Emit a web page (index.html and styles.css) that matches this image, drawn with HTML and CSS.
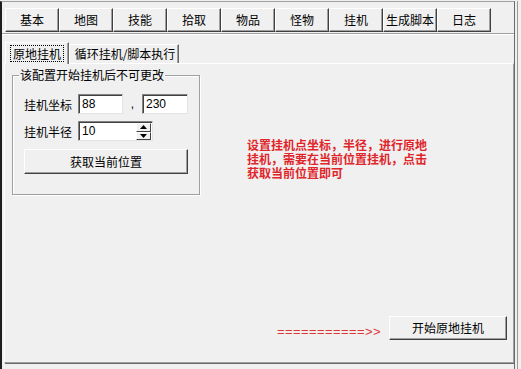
FILE: index.html
```html
<!DOCTYPE html>
<html>
<head>
<meta charset="utf-8">
<link rel="stylesheet" href="styles.css">
</head>
<body>
<div class="window">
  <div class="toolbar">
    <button class="tbtn">基本</button>
    <button class="tbtn">地图</button>
    <button class="tbtn">技能</button>
    <button class="tbtn">拾取</button>
    <button class="tbtn">物品</button>
    <button class="tbtn">怪物</button>
    <button class="tbtn">挂机</button>
    <button class="tbtn">生成脚本</button>
    <button class="tbtn">日志</button>
  </div>
  <div class="sep"></div>
  <div class="tabs">
    <div class="tab active"><span class="focus">原地挂机</span></div>
    <div class="tab second">循环挂机/脚本执行</div>
  </div>
  <div class="panel">
    <div class="top-area">
      <div class="group">
        <span class="group-title">该配置开始挂机后不可更改</span>
        <div class="row">
          <span class="label">挂机坐标</span>
          <span class="edit w45">88</span>
          <span class="comma">,</span>
          <span class="edit w46">230</span>
        </div>
        <div class="row row2">
          <span class="label">挂机半径</span>
          <span class="edit spinedit">10
            <span class="spin">
              <span class="spin-half"><svg width="7" height="4" viewBox="0 0 7 4"><path d="M0 4 L3.5 0 L7 4 Z" fill="#000"/></svg></span>
              <span class="spin-half"><svg width="7" height="4" viewBox="0 0 7 4"><path d="M0 0 L3.5 4 L7 0 Z" fill="#000"/></svg></span>
            </span>
          </span>
        </div>
        <button class="btn wide">获取当前位置</button>
      </div>
      <p class="note">设置挂机点坐标，半径，进行原地挂机，需要在当前位置挂机，点击获取当前位置即可</p>
    </div>
    <div class="bottom">
      <span class="arrow">===========&gt;&gt;</span>
      <button class="btn start">开始原地挂机</button>
    </div>
  </div>
</div>
</body>
</html>
```
FILE: styles.css
```css
* { box-sizing: border-box; }
html, body {
  margin: 0;
  padding: 0;
  background: #f0f0f0;
}
body {
  padding-top: 1px;
  font-family: "Noto Sans CJK SC", "Liberation Sans", sans-serif;
  font-size: 12px;
  color: #000;
}
.window {
  width: 515px;
  height: 368px;
  border-top: 1px solid #a0a0a0;
  border-left: 2px solid #1e1e1e;
  border-right: 1px solid #696969;
  box-shadow: 2px 0 0 #f0f0f0, 3px 0 0 #9a9a9a;
  background: #f0f0f0;
  display: flex;
  flex-direction: column;
}
.toolbar {
  display: flex;
  margin: 6px 0 0 3px;
}
.tbtn, .btn {
  font-family: "Noto Sans CJK SC", "Liberation Sans", sans-serif;
  font-size: 12px;
  color: #000;
  background: #f0f0f0;
  border: 1px solid;
  border-color: #ffffff #404040 #404040 #ffffff;
  box-shadow: inset -1px -1px 0 #a0a0a0;
  padding: 0;
  margin: 0;
  line-height: 14px;
}
.tbtn {
  width: 54px;
  height: 24px;
}
.sep {
  margin-top: 1px;
  border-top: 1px solid #a0a0a0;
  border-bottom: 1px solid #ffffff;
}
.tabs {
  display: flex;
  align-items: flex-end;
  margin: 7px 0 0 3px;
  height: 21px;
  position: relative;
  z-index: 2;
}
.tab {
  height: 19px;
  border: 1px solid;
  border-bottom: none;
  border-color: #ffffff #696969 transparent #ffffff;
  box-shadow: inset -1px 0 0 #a0a0a0;
  background: #f0f0f0;
  line-height: 17px;
  text-align: center;
  white-space: nowrap;
}
.tab.active {
  width: 64px;
  height: 22px;
  margin-bottom: -1px;
  padding-top: 2px;
}
.tab.second {
  width: 110px;
  padding-left: 2px;
}
.focus {
  display: inline-block;
  outline: 1px dotted #000;
  outline-offset: 0;
  padding: 0 2px;
  line-height: 15px;
}
.panel {
  margin-left: 2px;
  width: 510px;
  height: 300px;
  border: 1px solid;
  border-color: #ffffff #a0a0a0 #a0a0a0 #ffffff;
  box-shadow: 1px 1px 0 #696969;
  display: flex;
  flex-direction: column;
}
.top-area {
  display: flex;
  align-items: flex-start;
}
.group {
  position: relative;
  margin: 11px 0 0 7px;
  width: 188px;
  height: 120px;
  border: 1px solid #a0a0a0;
  box-shadow: inset 1px 1px 0 #ffffff, 1px 1px 0 #ffffff;
  padding: 18px 0 0 11px;
  display: flex;
  flex-direction: column;
}
.group-title {
  position: absolute;
  top: -8px;
  left: 6px;
  padding: 0 1px;
  background: #f0f0f0;
  line-height: 14px;
  white-space: nowrap;
}
.row {
  display: flex;
  align-items: center;
  height: 20px;
}
.row2 {
  margin-top: 7px;
}
.label {
  width: 54px;
  white-space: nowrap;
}
.edit {
  position: relative;
  height: 20px;
  background: #ffffff;
  border: 1px solid;
  border-color: #828282 #e3e3e3 #e3e3e3 #828282;
  box-shadow: inset 1px 1px 0 #404040;
  font-family: "Liberation Sans", sans-serif;
  font-size: 12px;
  line-height: 18px;
  padding-left: 3px;
}
.w45 { width: 45px; }
.w46 { width: 46px; }
.spinedit { width: 75px; }
.comma {
  width: 19px;
  text-align: center;
  font-family: "Liberation Sans", sans-serif;
}
.spin {
  position: absolute;
  top: 1px;
  right: 1px;
  width: 15px;
  height: 17px;
  display: flex;
  flex-direction: column;
}
.spin-half {
  flex: 1;
  display: flex;
  align-items: center;
  justify-content: center;
  background: #f0f0f0;
  border: 1px solid;
  border-color: #ffffff #404040 #404040 #ffffff;
}
.btn.wide {
  margin-top: 8px;
  width: 164px;
  height: 25px;
}
.note {
  margin: 74px 0 0 47px;
  width: 186px;
  color: #e0252a;
  font-weight: bold;
  font-size: 12px;
  line-height: 14px;
}
.bottom {
  margin-top: auto;
  display: flex;
  justify-content: flex-end;
  align-items: center;
  padding: 0 6px 22px 0;
}
.arrow {
  color: #e03535;
  font-family: "Liberation Sans", sans-serif;
  font-size: 13px;
  letter-spacing: 0.4px;
  margin: 6px 8px 0 0;
}
.btn.start {
  width: 118px;
  height: 24px;
}
```
